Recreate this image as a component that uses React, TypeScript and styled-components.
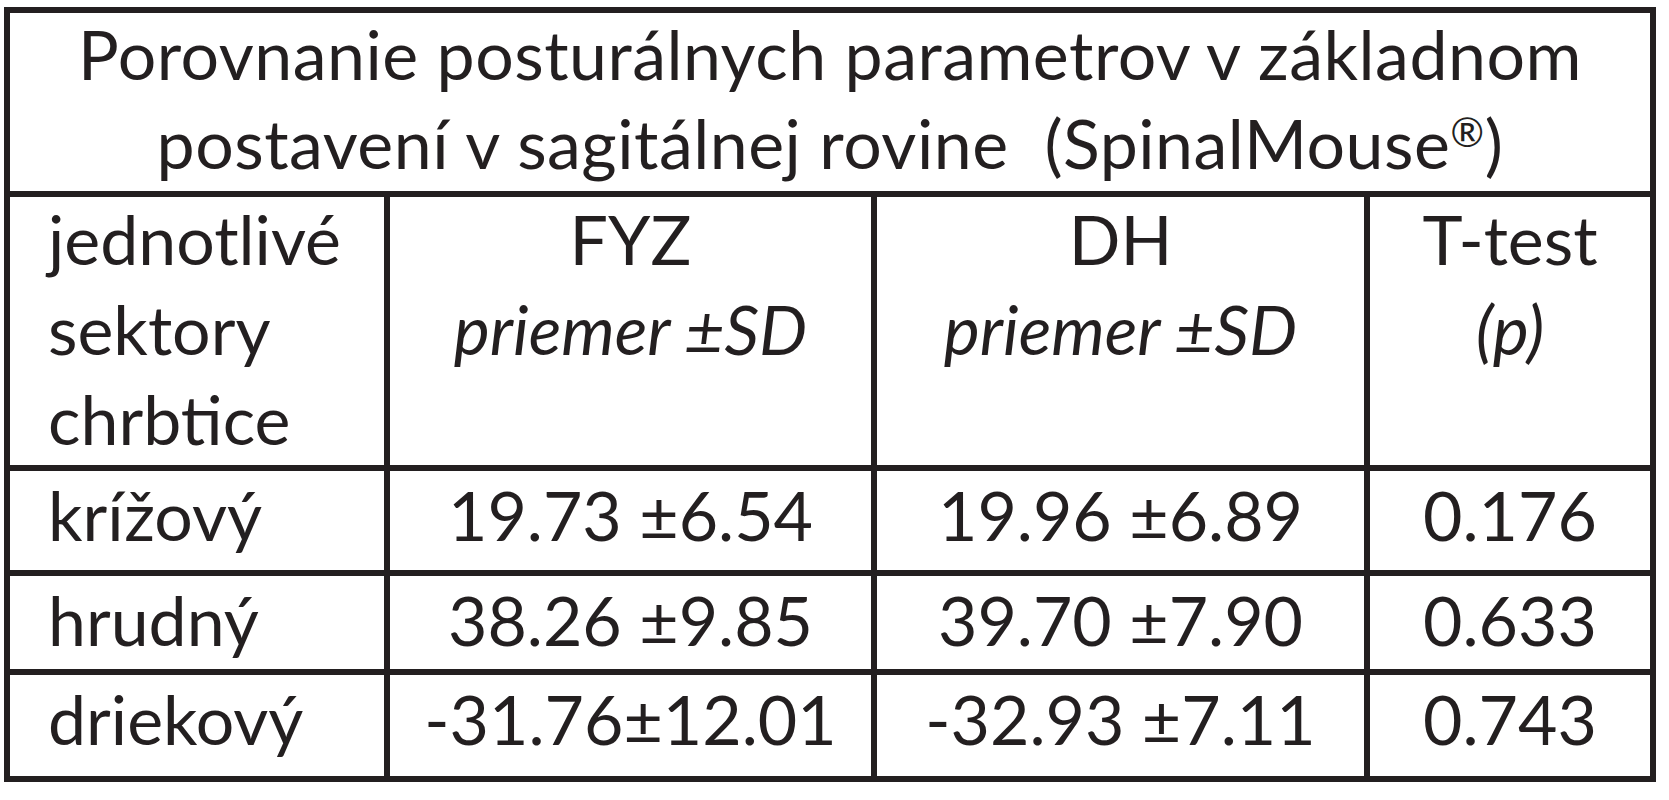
import React from 'react';
import styled, { createGlobalStyle } from 'styled-components';

const INK = '#231f20';

const GlobalStyle = createGlobalStyle`
  html, body {
    margin: 0;
    padding: 0;
    background: #ffffff;
  }
  body {
    font-family: 'Lato', 'Open Sans', sans-serif;
    color: ${INK};
  }
`;

type Row = {
  sector: string;
  fyz: string;
  dh: string;
  p: string;
};

const ROWS: Row[] = [
  { sector: 'krížový', fyz: '19.73 ±6.54', dh: '19.96 ±6.89', p: '0.176' },
  { sector: 'hrudný', fyz: '38.26 ±9.85', dh: '39.70 ±7.90', p: '0.633' },
  { sector: 'driekový', fyz: '-31.76±12.01', dh: '-32.93 ±7.11', p: '0.743' },
];

export default function App(): JSX.Element {
  return (
    <>
      <GlobalStyle />
      <Page>
        <Table>
          <TitleCell>
            <Lines $shift={-4}>
              Porovnanie posturálnych parametrov v základnom
              <br />
              postavení v sagitálnej rovine&nbsp; (SpinalMouse<Reg>®</Reg>)
            </Lines>
          </TitleCell>

          <Cell $align='left'>
            <Lines $shift={-3}>
              jednotlivé
              <br />
              sektory
              <br />
              chrbtice
            </Lines>
          </Cell>
          <Cell $align='center'>
            <Lines $shift={-3}>
              FYZ
              <br />
              <em>priemer ±SD</em>
            </Lines>
          </Cell>
          <Cell $align='center'>
            <Lines $shift={-3}>
              DH
              <br />
              <em>priemer ±SD</em>
            </Lines>
          </Cell>
          <Cell $align='center'>
            <Lines $shift={-3}>
              T-test
              <br />
              <em>(p)</em>
            </Lines>
          </Cell>

          {ROWS.map((row) => (
            <React.Fragment key={row.sector}>
              <Cell $align='left'>
                <Lines $shift={-1}>{row.sector}</Lines>
              </Cell>
              <Cell $align='center'>
                <Lines $shift={-1}>{row.fyz}</Lines>
              </Cell>
              <Cell $align='center'>
                <Lines $shift={-1}>{row.dh}</Lines>
              </Cell>
              <Cell $align='center'>
                <Lines $shift={-1}>{row.p}</Lines>
              </Cell>
            </React.Fragment>
          ))}
        </Table>
      </Page>
    </>
  );
}

const Page = styled.div`
  padding: 7px 0 0 4px;
`;

const Table = styled.div`
  display: grid;
  width: max-content;
  grid-template-columns: 374px 481px 487px 280px;
  grid-template-rows: 178px 268px 99px 93px 101px;
  gap: 6px;
  padding: 6px;
  background: ${INK};
`;

const Cell = styled.div<{ $align: 'left' | 'center' }>`
  background: #ffffff;
  overflow: hidden;
  font-size: 68px;
  line-height: 90px;
  text-align: ${(props) => props.$align};
  padding-left: ${(props) => (props.$align === 'left' ? '38px' : '0')};

  em {
    font-style: italic;
  }
`;

const TitleCell = styled(Cell).attrs({ $align: 'center' as const })`
  grid-column: 1 / -1;
  line-height: 89px;
  letter-spacing: 0.5px;
  white-space: nowrap;
`;

const Lines = styled.div<{ $shift: number }>`
  margin-top: ${(props) => props.$shift}px;
`;

const Reg = styled.sup`
  font-size: 0.6em;
  line-height: 0;
  vertical-align: 0.55em;
`;
